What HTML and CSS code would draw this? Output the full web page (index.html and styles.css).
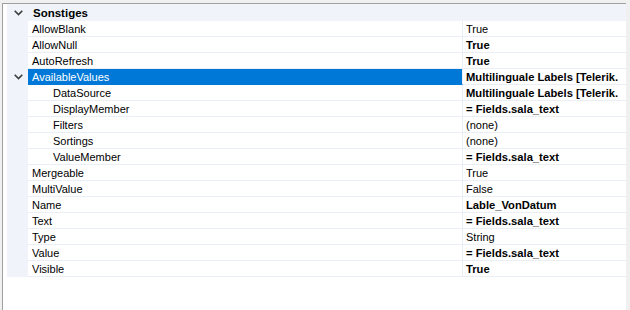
FILE: index.html
```html
<!DOCTYPE html>
<html lang="de">
<head>
    <meta charset="UTF-8">
    <title>Eigenschaften</title>
    <link rel="stylesheet" href="styles.css">
</head>
<body>
    <div class="frame">
        <div class="group">
            <span class="toggle">
                <svg width="9" height="6" viewBox="0 0 9 6"><path d="M0.7 0.8 L4.5 4.6 L8.3 0.8" fill="none" stroke="#3c3c3c" stroke-width="1.6"/></svg>
            </span>
            <span class="group-name">Sonstiges</span>
        </div>

        <div class="row"><span class="toggle"></span><span class="name">AllowBlank</span><span class="value">True</span></div>
        <div class="row"><span class="toggle"></span><span class="name">AllowNull</span><span class="value bold">True</span></div>
        <div class="row"><span class="toggle"></span><span class="name">AutoRefresh</span><span class="value bold">True</span></div>
        <div class="row selected">
            <span class="toggle">
                <svg width="9" height="6" viewBox="0 0 9 6"><path d="M0.7 0.8 L4.5 4.6 L8.3 0.8" fill="none" stroke="#3c3c3c" stroke-width="1.6"/></svg>
            </span>
            <span class="name">AvailableValues</span>
            <span class="value bold">Multilinguale Labels [Telerik.</span>
        </div>
        <div class="row"><span class="toggle"></span><span class="name sub">DataSource</span><span class="value bold">Multilinguale Labels [Telerik.</span></div>
        <div class="row"><span class="toggle"></span><span class="name sub">DisplayMember</span><span class="value bold">= Fields.sala_text</span></div>
        <div class="row"><span class="toggle"></span><span class="name sub">Filters</span><span class="value">(none)</span></div>
        <div class="row"><span class="toggle"></span><span class="name sub">Sortings</span><span class="value">(none)</span></div>
        <div class="row"><span class="toggle"></span><span class="name sub">ValueMember</span><span class="value bold">= Fields.sala_text</span></div>
        <div class="row"><span class="toggle"></span><span class="name">Mergeable</span><span class="value">True</span></div>
        <div class="row"><span class="toggle"></span><span class="name">MultiValue</span><span class="value">False</span></div>
        <div class="row"><span class="toggle"></span><span class="name">Name</span><span class="value bold">Lable_VonDatum</span></div>
        <div class="row"><span class="toggle"></span><span class="name">Text</span><span class="value bold">= Fields.sala_text</span></div>
        <div class="row"><span class="toggle"></span><span class="name">Type</span><span class="value">String</span></div>
        <div class="row"><span class="toggle"></span><span class="name">Value</span><span class="value bold">= Fields.sala_text</span></div>
        <div class="row"><span class="toggle"></span><span class="name">Visible</span><span class="value bold">True</span></div>
    </div>
</body>
</html>
```

FILE: styles.css
```css
body {
    margin: 0;
    background: #f0f0f0;
    font-family: "Liberation Sans", Arial, sans-serif;
    font-size: 11px;
    color: #000;
    overflow: hidden;
}
.frame {
    margin: 3px 4px 0 2px;
    height: 320px;
    border-left: 1px solid #a0a0a0;
    border-top: 1px solid #a0a0a0;
    background: #fff;
    padding-left: 4px;
}
.group {
    display: flex;
    align-items: center;
    height: 17px;
    background: #f0f4fa;
}
.toggle {
    width: 21px;
    flex: none;
    display: flex;
    align-items: center;
    justify-content: center;
    align-self: stretch;
    padding-left: 1px;
    box-sizing: border-box;
}
.group-name {
    font-weight: bold;
    font-size: 11.5px;
    padding-left: 5px;
}
.row {
    display: flex;
    height: 16px;
}
.row .toggle {
    background: #f0f4fa;
}
.name,
.value {
    padding-top: 1px;
    line-height: 14px;
    border-bottom: 1px solid #eaeef5;
    white-space: nowrap;
}
.name {
    width: 435px;
    flex: none;
    padding-left: 4px;
    box-sizing: border-box;
    border-right: 1px solid #eaeef5;
}
.name.sub {
    padding-left: 25px;
}
.value {
    flex: 1;
    min-width: 0;
    padding-left: 3px;
    overflow: hidden;
}
.bold {
    font-weight: bold;
    font-size: 11.2px;
}
.selected .name {
    background: #0078d7;
    color: #fff;
    border-bottom-color: #0078d7;
}
```
